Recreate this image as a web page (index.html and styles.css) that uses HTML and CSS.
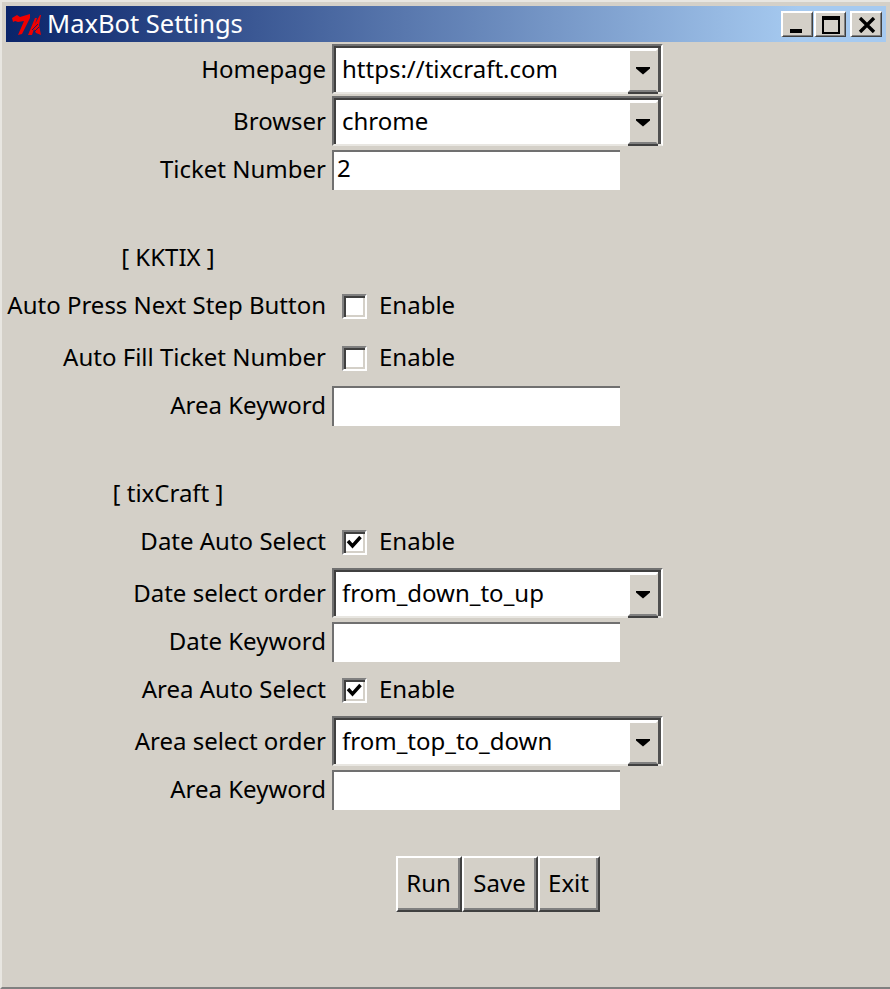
FILE: index.html
```
<!DOCTYPE html>
<html lang="en">
<head>
<meta charset="utf-8">
<title>MaxBot Settings</title>
<link rel="stylesheet" href="styles.css">
</head>
<body>
<div class="window">
  <header class="titlebar">
    <svg class="tk-icon" width="30" height="24" viewBox="0 0 30 24" aria-hidden="true">
      <path class="tk-seven" d="M1 6 L6 3 L9 5 L19 2 L19 6 L11 22 L7 23 L13 9 L7 10 L4 9 L2 10 Z"/>
      <path class="tk-k" d="M17 23 L24 6 L26 6 L24 12 L29 3 L30 3 L28 13 L30 23 L25 21 L23 17 L21 23 Z"/>
      <path class="tk-hatch" d="M21 18 L27 12 M23 20 L28 15"/>
    </svg>
    <span class="title-text">MaxBot Settings</span>
    <div class="win-controls">
      <div class="win-btn"><span class="glyph-min"></span></div>
      <div class="win-btn"><span class="glyph-max"></span></div>
      <div class="win-btn win-btn-close">
        <svg width="18" height="16" viewBox="0 0 18 16" aria-hidden="true"><path class="glyph-x" d="M2 1 L16 15 M16 1 L2 15"/></svg>
      </div>
    </div>
  </header>
  <main class="form">
    <div class="label">Homepage</div>
    <div class="combo"><span class="combo-text">https://tixcraft.com</span><span class="combo-btn"><i class="arrow"></i></span></div>
    <div class="label">Browser</div>
    <div class="combo"><span class="combo-text">chrome</span><span class="combo-btn"><i class="arrow"></i></span></div>
    <div class="label">Ticket Number</div>
    <div class="entry">2</div>
    <div class="spacer"></div>

    <div class="heading">[ KKTIX ]</div>
    <div class="label">Auto Press Next Step Button</div>
    <div class="check"><span class="box"></span><span class="check-text">Enable</span></div>
    <div class="label">Auto Fill Ticket Number</div>
    <div class="check"><span class="box"></span><span class="check-text">Enable</span></div>
    <div class="label">Area Keyword</div>
    <div class="entry"></div>
    <div class="spacer"></div>

    <div class="heading">[ tixCraft ]</div>
    <div class="label">Date Auto Select</div>
    <div class="check"><span class="box"><svg width="19" height="19" viewBox="0 0 19 19" aria-hidden="true"><path class="tick" d="M3 8 L7.5 13 L15.5 4"/></svg></span><span class="check-text">Enable</span></div>
    <div class="label">Date select order</div>
    <div class="combo"><span class="combo-text">from_down_to_up</span><span class="combo-btn"><i class="arrow"></i></span></div>
    <div class="label">Date Keyword</div>
    <div class="entry"></div>
    <div class="label">Area Auto Select</div>
    <div class="check"><span class="box"><svg width="19" height="19" viewBox="0 0 19 19" aria-hidden="true"><path class="tick" d="M3 8 L7.5 13 L15.5 4"/></svg></span><span class="check-text">Enable</span></div>
    <div class="label">Area select order</div>
    <div class="combo"><span class="combo-text">from_top_to_down</span><span class="combo-btn"><i class="arrow"></i></span></div>
    <div class="label">Area Keyword</div>
    <div class="entry"></div>
    <div class="spacer"></div>

    <div class="buttons">
      <div class="btn btn-run">Run</div>
      <div class="btn btn-save">Save</div>
      <div class="btn btn-exit">Exit</div>
    </div>
  </main>
</div>
</body>
</html>
```
FILE: styles.css
```
html, body {
  margin: 0;
  padding: 0;
}
body {
  width: 890px;
  height: 989px;
  overflow: hidden;
  background: #d4d0c8;
}
.window {
  box-sizing: border-box;
  height: 989px;
  padding: 4px 4px 0 4px;
  border-left: 2px solid #e8e6e1;
  border-top: 2px solid #e8e6e1;
  border-bottom: 2px solid #808080;
  font-family: "Noto Sans", sans-serif;
  font-size: 24px;
  color: #000;
}
.titlebar {
  display: flex;
  align-items: center;
  height: 36px;
  background: linear-gradient(to right, #0a246a, #a6caf0 90%);
  color: #fff;
}
.tk-icon {
  flex: none;
  margin-left: 5px;
  margin-right: 6px;
}
.tk-seven, .tk-k {
  fill: #f00000;
}
.tk-hatch {
  fill: none;
  stroke: #0a246a;
  stroke-width: 1;
}
.title-text {
  font-size: 25.5px;
  line-height: 36px;
  padding-bottom: 3px;
}
.win-controls {
  display: flex;
  margin-left: auto;
  margin-right: 4px;
  gap: 1px;
}
.win-btn {
  box-sizing: border-box;
  width: 32px;
  height: 26px;
  display: flex;
  align-items: center;
  justify-content: center;
  background: #d4d0c8;
  border-style: solid;
  border-width: 2px 1px 1px 2px;
  border-color: #fff #404040 #404040 #fff;
  box-shadow: inset -1px -1px 0 #808080;
}
.win-btn-close {
  margin-left: 3px;
}
.glyph-min {
  width: 12px;
  height: 4px;
  background: #000;
  align-self: flex-end;
  margin-bottom: 3px;
  margin-right: 4px;
}
.glyph-max {
  box-sizing: border-box;
  width: 18px;
  height: 18px;
  border: 2px solid #000;
  border-top-width: 4px;
}
.glyph-x {
  stroke: #000;
  stroke-width: 3.4;
  fill: none;
}
.form {
  display: grid;
  grid-template-columns: 324px 331px;
  grid-template-rows: 52px 52px 44px 44px 44px 52px 52px 44px 44px 44px 52px 52px 44px 52px 52px 44px 44px 56px;
  column-gap: 2px;
  margin-top: 2px;
}
.label {
  grid-column: 1;
  align-self: center;
  justify-self: end;
  padding-right: 4px;
  padding-bottom: 4px;
  white-space: nowrap;
}
.heading {
  grid-column: 1;
  align-self: center;
  justify-self: center;
  padding-bottom: 4px;
}
.spacer {
  grid-column: 1 / -1;
}
.combo {
  grid-column: 2;
  box-sizing: border-box;
  height: 50px;
  display: flex;
  align-items: center;
  justify-content: space-between;
  background: #fff;
  border-style: solid;
  border-width: 2px;
  border-color: #707070 #fff #e8e6e1 #707070;
  box-shadow: inset 2px 2px 0 #404040, inset -3px 0 0 #505050;
  padding: 3px 3px 0 8px;
}
.combo-text {
  white-space: nowrap;
  padding-bottom: 4px;
}
.combo-btn {
  box-sizing: border-box;
  width: 30px;
  height: 43px;
  display: flex;
  align-items: center;
  justify-content: center;
  background: #d4d0c8;
  border-style: solid;
  border-width: 2px;
  border-color: #fff #d4d0c8 #808080 #fff;
  box-shadow: 0 2px 0 #404040;
}
.arrow {
  width: 14px;
  height: 8px;
  background: #000;
  clip-path: polygon(0 0, 100% 0, 100% 25%, 50% 100%, 0 25%);
}
.entry {
  grid-column: 2;
  align-self: start;
  box-sizing: border-box;
  width: 288px;
  height: 40px;
  margin-top: 2px;
  padding-left: 3px;
  line-height: 32px;
  background: #fff;
  border-top: 2px solid #707070;
  border-left: 2px solid #707070;
}
.check {
  grid-column: 2;
  display: flex;
  align-items: center;
  gap: 12px;
  padding-left: 10px;
}
.check-text {
  padding-bottom: 4px;
}
.box {
  box-sizing: border-box;
  width: 25px;
  height: 25px;
  display: flex;
  align-items: center;
  justify-content: center;
  background: #fff;
  border-style: solid;
  border-width: 2px;
  border-color: #808080 #fff #fff #808080;
  box-shadow: inset 2px 2px 0 #404040, inset -2px -2px 0 #d4d0c8;
}
.tick {
  fill: none;
  stroke: #000;
  stroke-width: 3.4;
}
.buttons {
  grid-column: 2;
  display: flex;
  justify-content: center;
}
.btn {
  box-sizing: border-box;
  height: 56px;
  padding-bottom: 4px;
  display: flex;
  align-items: center;
  justify-content: center;
  background: #d4d0c8;
  border-style: solid;
  border-width: 2px;
  border-color: #fff #404040 #404040 #fff;
  box-shadow: inset -2px -2px 0 #808080;
}
.btn-run { width: 66px; }
.btn-save { width: 76px; }
.btn-exit { width: 62px; }
```
